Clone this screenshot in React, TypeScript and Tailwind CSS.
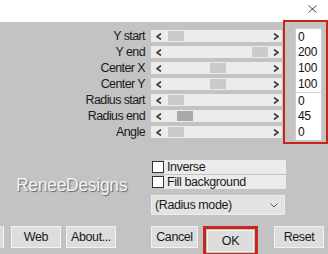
import React from "react";

const ROWS = [
  { label: "Y start", value: "0", thumb: 17 },
  { label: "Y end", value: "200", thumb: 101 },
  { label: "Center X", value: "100", thumb: 59 },
  { label: "Center Y", value: "100", thumb: 59 },
  { label: "Radius start", value: "0", thumb: 17 },
  { label: "Radius end", value: "45", thumb: 26, active: true },
  { label: "Angle", value: "0", thumb: 17 },
];

function Chevron({ dir }: { dir: "left" | "right" }) {
  return (
    <svg width="6" height="7" viewBox="0 0 6 7" className="shrink-0">
      <polyline
        points={dir === "left" ? "5,0.5 1,3.5 5,6.5" : "1,0.5 5,3.5 1,6.5"}
        fill="none"
        stroke="#3a3a3a"
        strokeWidth="1.6"
      />
    </svg>
  );
}

function Track({ thumb, active }: { thumb: number; active?: boolean }) {
  return (
    <div className="relative flex h-[12px] w-[131px] items-center justify-between bg-[#ececec] pl-[5px] pr-[3px]">
      <Chevron dir="left" />
      <div
        className={`absolute top-[1px] h-[10px] w-[16px] ${active ? "bg-[#a9a9a9]" : "bg-[#cacaca]"}`}
        style={{ left: thumb }}
      />
      <Chevron dir="right" />
    </div>
  );
}

function Btn({ label, w }: { label: string; w: string }) {
  return (
    <div
      className={`flex h-[22px] ${w} items-center justify-center border border-[#f2f2f2] bg-[#dddddd] text-[12.5px] tracking-[-0.4px] text-[#1a1a1a]`}
    >
      {label}
    </div>
  );
}

export default function App() {
  return (
    <div className="relative h-[254px] w-[328px] overflow-hidden bg-[#c3c3c3] font-['Liberation_Sans',Arial,sans-serif]">
      {/* title strip */}
      <div className="flex h-[22px] items-start justify-end bg-white pr-[11px] pt-[5px]">
        <svg width="9" height="8" viewBox="0 0 9 8">
          <path d="M0.5 0.5 L8.5 7.5 M8.5 0.5 L0.5 7.5" stroke="#333" strokeWidth="0.9" fill="none" />
        </svg>
      </div>

      {/* sliders + values */}
      <div className="flex">
        <div className="flex w-[283px] flex-col pt-[8px]">
          {ROWS.map((r) => (
            <div key={r.label} className="flex h-[16px] items-start">
              <div className="w-[146px] pr-[1px] text-right text-[12.5px] leading-[13px] tracking-[-0.6px] text-[#1a1a1a]">
                {r.label}
              </div>
              <div className="ml-[5px]">
                <Track thumb={r.thumb} active={r.active} />
              </div>
            </div>
          ))}
        </div>
        <div className="relative z-10 -mt-[2px] h-[124px] w-[45px] border-2 border-[#c8261c] pl-[10px] pt-[6px]">
          {ROWS.map((r, i) => (
            <div
              key={r.label}
              className={`flex h-[16px] w-[27px] items-center border-x border-[#cfcfcf] bg-white pl-[2px] text-[12px] leading-none tracking-[-0.3px] text-[#111] ${i === 0 || i === 4 ? "border-t" : ""}`}
            >
              {r.value}
            </div>
          ))}
        </div>
      </div>

      {/* options */}
      <div className="mt-[16px] flex">
        <div className="w-[151px] pl-[16px] pt-[12px]">
          <span className="text-[17.5px] tracking-[-0.3px] text-[#f4f4f4] [text-shadow:1px_1px_1px_#666]">
            ReneeDesigns
          </span>
        </div>
        <div className="flex w-[135px] flex-col">
          <div className="flex h-[14px] items-center">
            <div className="ml-[1px] h-[12px] w-[12px] shrink-0 border border-[#333] bg-white" />
            <div className="flex h-[14px] flex-1 items-center bg-[#ebebeb] pl-[3px] text-[12.5px] tracking-[-0.4px] text-[#1a1a1a]">
              Inverse
            </div>
          </div>
          <div className="mt-[1px] flex h-[14px] items-center">
            <div className="ml-[1px] h-[12px] w-[12px] shrink-0 border border-[#333] bg-white" />
            <div className="flex h-[14px] flex-1 items-center bg-[#ebebeb] pl-[3px] text-[12.5px] tracking-[-0.4px] text-[#1a1a1a]">
              Fill background
            </div>
          </div>
          <div className="mt-[6px] flex h-[20px] w-[134px] items-center justify-between border border-[#ededed] bg-[#e3e3e3] pl-[3px] pr-[6px] text-[12.5px] tracking-[-0.4px] text-[#1a1a1a]">
            <span>(Radius mode)</span>
            <svg width="8" height="5" viewBox="0 0 8 5">
              <polyline points="0.5,0.5 4,4 7.5,0.5" fill="none" stroke="#555" strokeWidth="1" />
            </svg>
          </div>
        </div>
      </div>

      {/* buttons */}
      <div className="mt-[11px] flex items-start">
        <div className="h-[22px] w-[4px] border-r border-[#f2f2f2] bg-[#dddddd]" />
        <div className="ml-[7px]">
          <Btn label="Web" w="w-[50px]" />
        </div>
        <div className="ml-[5px]">
          <Btn label="About..." w="w-[50px]" />
        </div>
        <div className="ml-[35px]">
          <Btn label="Cancel" w="w-[47px]" />
        </div>
        <div className="ml-[5px] h-[30px] w-[55px] border-[3px] border-[#c8261c] pl-[1px] pt-[1px]">
          <Btn label="OK" w="w-[47px]" />
        </div>
        <div className="ml-[16px]">
          <Btn label="Reset" w="w-[50px]" />
        </div>
      </div>
    </div>
  );
}
